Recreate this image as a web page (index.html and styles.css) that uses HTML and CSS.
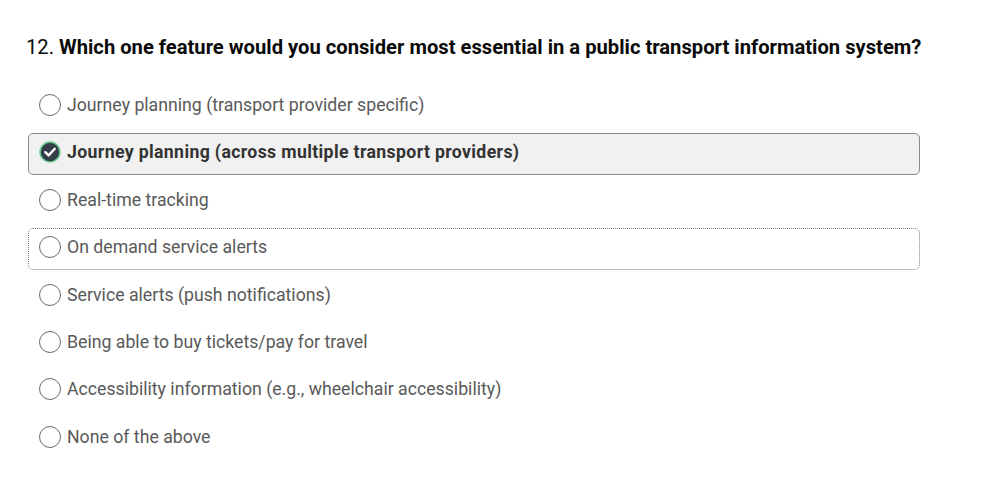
FILE: index.html
```html
<!DOCTYPE html>
<html>
<head>
<meta charset="utf-8">
<link rel="stylesheet" href="styles.css">
</head>
<body>
<div class="question">
  <h2 class="title"><span class="num">12.</span> <span class="text">Which one feature would you consider most essential in a public transport information system?</span></h2>
  <div class="options">
    <div class="option"><span class="radio"></span><span class="label">Journey planning (transport provider specific)</span></div>
    <div class="option selected"><span class="radio checked"><svg viewBox="0 0 22 22" width="22" height="22"><circle cx="11" cy="11" r="10" fill="#333e48" stroke="#6fcf97" stroke-width="1.5"/><path d="M6.3 11.2 L9.6 14.4 L15.8 7.8" fill="none" stroke="#fff" stroke-width="2.4" stroke-linecap="round" stroke-linejoin="round"/></svg></span><span class="label">Journey planning (across multiple transport providers)</span></div>
    <div class="option"><span class="radio"></span><span class="label">Real-time tracking</span></div>
    <div class="option focused"><span class="radio"></span><span class="label">On demand service alerts</span></div>
    <div class="option"><span class="radio"></span><span class="label">Service alerts (push notifications)</span></div>
    <div class="option"><span class="radio"></span><span class="label">Being able to buy tickets/pay for travel</span></div>
    <div class="option"><span class="radio"></span><span class="label">Accessibility information (e.g., wheelchair accessibility)</span></div>
    <div class="option"><span class="radio"></span><span class="label">None of the above</span></div>
  </div>
</div>
</body>
</html>
```

FILE: styles.css
```css
html, body {
  margin: 0;
  padding: 0;
  background: #ffffff;
}
body {
  font-family: Roboto, "Liberation Sans", Arial, sans-serif;
  color: #333e48;
}
.question {
  padding: 33px 0 0 26px;
  width: 940px;
}
.title {
  margin: 0 0 25px 0;
  font-size: 20.2px;
  line-height: 28px;
  font-weight: 700;
  color: #0a0a0a;
  white-space: nowrap;
}
.title .num {
  font-weight: 400;
}
.options {
  display: flex;
  flex-direction: column;
  gap: 5.4px;
  margin-left: 2px;
  width: 892px;
}
.option {
  box-sizing: border-box;
  height: 42px;
  display: flex;
  align-items: center;
  padding-left: 10px;
  padding-bottom: 4px;
  border: 1px solid transparent;
  border-radius: 5px;
}
.option.selected {
  background: #f1f1f1;
  border-color: #8a8a8a;
}
.option.focused {
  border: 1px dotted #7a7a7a;
}
.radio {
  box-sizing: border-box;
  width: 22px;
  height: 22px;
  border: 1.5px solid #6b6b6b;
  border-radius: 50%;
  background: #fff;
  flex: none;
}
.radio.checked {
  border: none;
  background: transparent;
}
.radio svg {
  display: block;
}
.label {
  margin-left: 6px;
  font-size: 17.7px;
  color: #595959;
  line-height: 22px;
}
.selected .label {
  font-weight: 700;
  color: #333333;
  letter-spacing: 0.35px;
}
```
